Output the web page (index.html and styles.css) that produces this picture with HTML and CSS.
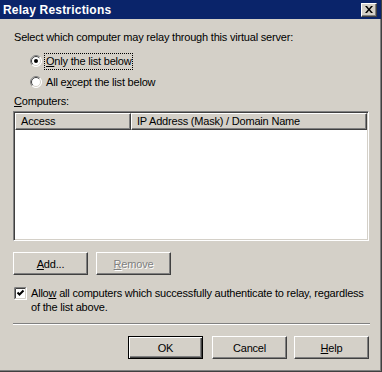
FILE: index.html
```html
<!DOCTYPE html>
<html lang="en">
<head>
    <meta charset="UTF-8">
    <title>Relay Restrictions</title>
    <link rel="stylesheet" href="styles.css">
</head>
<body>

    <div class="window">
        <header class="titlebar">
            <span class="title">Relay Restrictions</span>
            <button class="close-btn" type="button" title="Close">
                <svg width="8" height="7" viewBox="0 0 8 7">
                    <path d="M0 0 L2 0 L4 2.5 L6 0 L8 0 L5 3.5 L8 7 L6 7 L4 4.5 L2 7 L0 7 L3 3.5 Z" fill="#000"/>
                </svg>
            </button>
        </header>

        <main class="content">
            <p class="intro">Select which computer may relay through this virtual server:</p>

            <div class="options">
                <label class="radio-row">
                    <svg class="radio" width="12" height="12" viewBox="0 0 12 12">
                        <circle cx="6" cy="6" r="5.5" fill="#fff"/>
                        <path d="M2.1 9.9 A5.5 5.5 0 0 1 9.9 2.1" stroke="#808080" fill="none"/>
                        <path d="M9.9 2.1 A5.5 5.5 0 0 1 2.1 9.9" stroke="#ffffff" fill="none"/>
                        <path d="M2.8 9.2 A4.5 4.5 0 0 1 9.2 2.8" stroke="#404040" fill="none"/>
                        <path d="M9.2 2.8 A4.5 4.5 0 0 1 2.8 9.2" stroke="#d4d0c8" fill="none"/>
                        <circle cx="6" cy="6" r="2" fill="#000"/>
                    </svg>
                    <span class="focus"><u>O</u>nly the list below</span>
                </label>
                <label class="radio-row">
                    <svg class="radio" width="12" height="12" viewBox="0 0 12 12">
                        <circle cx="6" cy="6" r="5.5" fill="#fff"/>
                        <path d="M2.1 9.9 A5.5 5.5 0 0 1 9.9 2.1" stroke="#808080" fill="none"/>
                        <path d="M9.9 2.1 A5.5 5.5 0 0 1 2.1 9.9" stroke="#ffffff" fill="none"/>
                        <path d="M2.8 9.2 A4.5 4.5 0 0 1 9.2 2.8" stroke="#404040" fill="none"/>
                        <path d="M9.2 2.8 A4.5 4.5 0 0 1 2.8 9.2" stroke="#d4d0c8" fill="none"/>
                    </svg>
                    <span class="label-text">All e<u>x</u>cept the list below</span>
                </label>
            </div>

            <p class="list-label"><u>C</u>omputers:</p>

            <div class="listbox">
                <div class="list-header">
                    <div class="col col-access">Access</div>
                    <div class="col col-ip">IP Address (Mask) / Domain Name</div>
                </div>
                <div class="list-body"></div>
            </div>

            <div class="list-buttons">
                <button type="button" class="btn"><u>A</u>dd...</button>
                <button type="button" class="btn disabled"><u>R</u>emove</button>
            </div>

            <label class="check-row">
                <svg class="checkbox" width="13" height="13" viewBox="0 0 13 13">
                    <rect x="0" y="0" width="13" height="13" fill="#fff"/>
                    <path d="M0.5 12.5 L0.5 0.5 L12.5 0.5" stroke="#808080" fill="none"/>
                    <path d="M1.5 11.5 L1.5 1.5 L11.5 1.5" stroke="#404040" fill="none"/>
                    <path d="M1.5 11.5 L11.5 11.5 L11.5 1.5" stroke="#d4d0c8" fill="none"/>
                    <path d="M0.5 12.5 L12.5 12.5 L12.5 0.5" stroke="#ffffff" fill="none"/>
                    <path d="M3.5 5.5 L5.5 7.5 L9.5 3.5" stroke="#000" stroke-width="2" fill="none"/>
                </svg>
                <span class="check-text">Allo<u>w</u> all computers which successfully authenticate to relay, regardless of the list above.</span>
            </label>

            <hr class="separator">

            <div class="dialog-buttons">
                <button type="button" class="btn default">OK</button>
                <button type="button" class="btn btn-cancel">Cancel</button>
                <button type="button" class="btn btn-help"><u>H</u>elp</button>
            </div>
        </main>
    </div>

</body>
</html>
```

FILE: styles.css
```css
body { margin: 0; font-family: "Liberation Sans", Arial, sans-serif; font-size: 11px; letter-spacing: -0.2px; color: #000; background: #d4d0c8; }
p { margin: 0; }
u { text-decoration: underline; text-underline-offset: 1px; }

.window { width: 382px; height: 372px; box-sizing: border-box; background: #d4d0c8; border-right: 1px solid #404040; border-bottom: 1px solid #404040; box-shadow: inset -1px -1px 0 #808080; }

.titlebar { height: 19px; background: #0a246a; display: flex; align-items: center; justify-content: space-between; padding: 0 4px 0 3px; }
.title { color: #fff; font-weight: bold; font-size: 12px; letter-spacing: 0.2px; }
.close-btn { width: 16px; height: 14px; padding: 0; background: #d4d0c8; border: 1px solid; border-color: #fff #404040 #404040 #fff; box-shadow: inset -1px -1px 0 #808080; display: flex; align-items: center; justify-content: center; }

.content { padding: 0 12px 0 13px; }
.intro { margin-top: 12px; line-height: 13px; padding-left: 1px; }

.options { margin-top: 9px; padding-left: 17px; display: flex; flex-direction: column; gap: 5px; }
.radio-row { display: flex; align-items: center; gap: 3px; height: 16px; }
.radio { flex: none; }
.focus { outline: 1px dotted #000; padding: 1px 1px; line-height: 13px; }
.label-text { padding: 1px 1px; line-height: 13px; }

.list-label { margin-top: 5px; padding-left: 1px; line-height: 13px; }

.listbox { margin-top: 3px; width: 356px; height: 130px; box-sizing: border-box; background: #fff; border: 1px solid; border-color: #808080 #fff #fff #808080; box-shadow: inset 1px 1px 0 #404040, inset -1px -1px 0 #d4d0c8; padding: 1px; display: flex; flex-direction: column; }
.list-header { display: flex; height: 17px; flex: none; }
.col { box-sizing: border-box; background: #d4d0c8; border: 1px solid; border-color: #fff #404040 #404040 #fff; box-shadow: inset -1px -1px 0 #808080; padding: 0 5px; line-height: 15px; }
.col-access { width: 116px; }
.col-ip { width: 236px; }
.list-body { flex: 1; }

.list-buttons { margin-top: 11px; display: flex; gap: 8px; }
.btn { width: 75px; height: 23px; box-sizing: border-box; padding: 0; font-family: inherit; font-size: 11px; letter-spacing: -0.2px; color: #000; background: #d4d0c8; border: 1px solid; border-color: #fff #404040 #404040 #fff; box-shadow: inset -1px -1px 0 #808080; }
.btn.disabled { color: #808080; text-shadow: 1px 1px 0 #fff; }
.btn.default { border: 1px solid #000; box-shadow: inset 1px 1px 0 #fff, inset -1px -1px 0 #404040, inset -2px -2px 0 #808080; }

.check-row { margin-top: 12px; display: flex; align-items: flex-start; gap: 4px; line-height: 14px; padding-left: 1px; }
.checkbox { flex: none; }
.check-text { margin-top: -1px; }

.separator { margin: 9px 0 0 0; border: none; border-top: 1px solid #808080; border-bottom: 1px solid #fff; width: 357px; }

.dialog-buttons { margin-top: 11px; display: flex; justify-content: flex-end; padding-right: 0; }
.btn-cancel { margin-left: 9px; }
.btn-help { margin-left: 7px; }
```
